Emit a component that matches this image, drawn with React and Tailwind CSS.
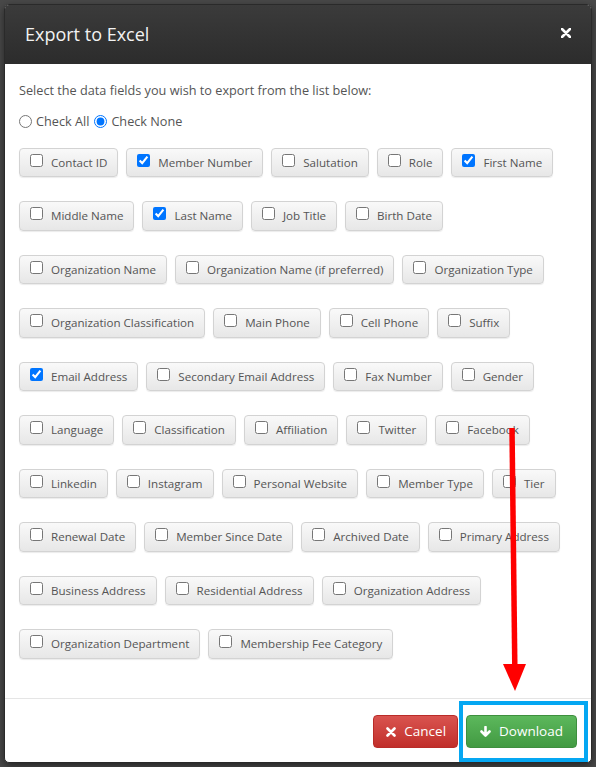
const fields = [
  ['Contact ID', false],
  ['Member Number', true],
  ['Salutation', false],
  ['Role', false],
  ['First Name', true],
  ['Middle Name', false],
  ['Last Name', true],
  ['Job Title', false],
  ['Birth Date', false],
  ['Organization Name', false],
  ['Organization Name (if preferred)', false],
  ['Organization Type', false],
  ['Organization Classification', false],
  ['Main Phone', false],
  ['Cell Phone', false],
  ['Suffix', false],
  ['Email Address', true],
  ['Secondary Email Address', false],
  ['Fax Number', false],
  ['Gender', false],
  ['Language', false],
  ['Classification', false],
  ['Affiliation', false],
  ['Twitter', false],
  ['Facebook', false],
  ['Linkedin', false],
  ['Instagram', false],
  ['Personal Website', false],
  ['Member Type', false],
  ['Tier', false],
  ['Renewal Date', false],
  ['Member Since Date', false],
  ['Archived Date', false],
  ['Primary Address', false],
  ['Business Address', false],
  ['Residential Address', false],
  ['Organization Address', false],
  ['Organization Department', false],
  ['Membership Fee Category', false],
];

function FieldButton({ label, checked }) {
  return (
    <label className="flex h-[29.5px] items-center gap-2 rounded-[4px] border border-[#d3d3d3] bg-linear-to-b from-[#f9f9f9] to-[#e7e7e7] px-[10px] text-[11.6px] text-[#555] shadow-[0_1px_1px_rgba(0,0,0,0.08)]">
      <input type="checkbox" defaultChecked={checked} className="mb-1 h-[13px] w-[13px]" />
      <span>{label}</span>
    </label>
  );
}

export default function App() {
  return (
    <div className="relative min-h-[767px] bg-[#494949] p-1" style={{ fontFamily: '"Open Sans", "Liberation Sans", sans-serif' }}>
      <div className="flex h-[759px] flex-col overflow-hidden rounded-[5px] border border-[#2a2a2a] bg-white shadow-[0_3px_9px_rgba(0,0,0,0.5)]">
        <div className="flex h-[59px] shrink-0 items-center justify-between bg-linear-to-b from-[#3b3b3b] to-[#2c2c2c] pl-[20px] pr-[20px]">
          <h2 className="text-[18px] text-[#f2f2f2]">Export to Excel</h2>
          <svg width="10" height="10" viewBox="0 0 10 10" className="mb-[4px]">
            <path d="M1 1 L9 9 M9 1 L1 9" stroke="#fff" strokeWidth="2.6" strokeLinecap="round" />
          </svg>
        </div>

        <div className="flex-1 px-[14px] pt-[17px] text-[12.7px] text-[#555]">
          <p>Select the data fields you wish to export from the list below:</p>
          <div className="mt-[12px] flex items-center">
            <input type="radio" name="chk" className="mr-[4px] h-[13px] w-[13px]" />
            <span className="mr-[5px]">Check All</span>
            <input type="radio" name="chk" defaultChecked className="mr-[4px] h-[13px] w-[13px]" />
            <span>Check None</span>
          </div>
          <div className="mt-[16.5px] flex flex-wrap gap-x-2 gap-y-[24px]">
            {fields.map(([label, checked]) => (
              <FieldButton key={label} label={label} checked={checked} />
            ))}
          </div>
        </div>

        <div className="flex shrink-0 justify-end gap-2 border-t border-[#e5e5e5] px-[14px] pb-[14px] pt-[16px]">
          <button className="flex h-[33px] items-center gap-2 rounded-[4px] border border-[#b92c28] bg-linear-to-b from-[#d9534f] to-[#c12e2a] pl-[12px] pr-[11px] text-[13.5px] text-white">
            <svg width="10" height="10" viewBox="0 0 10 10">
              <path d="M1.5 1.5 L8.5 8.5 M8.5 1.5 L1.5 8.5" stroke="#fff" strokeWidth="2.6" strokeLinecap="round" />
            </svg>
            Cancel
          </button>
          <button className="flex h-[33px] items-center gap-2 rounded-[4px] border border-[#3e8f3e] bg-linear-to-b from-[#5cb85c] to-[#429a42] px-[13px] text-[13.5px] text-white">
            <svg width="11" height="11" viewBox="0 0 11 11">
              <path d="M5.5 1 V9 M1.5 5.5 L5.5 9.5 L9.5 5.5" stroke="#fff" strokeWidth="2.6" fill="none" strokeLinecap="round" strokeLinejoin="round" />
            </svg>
            Download
          </button>
        </div>
      </div>

      {/* annotation: highlight box around Download */}
      <div className="pointer-events-none absolute left-[459px] top-[701px] h-[61px] w-[129px] border-4 border-[#05a7f2]" />

      {/* annotation: red arrow */}
      <svg className="pointer-events-none absolute left-0 top-0" width="596" height="767">
        <line x1="512" y1="428" x2="514.8" y2="666" stroke="#ff0000" strokeWidth="5.5" />
        <polygon points="503,664 526,664 515,691" fill="#ff0000" />
      </svg>
    </div>
  );
}
